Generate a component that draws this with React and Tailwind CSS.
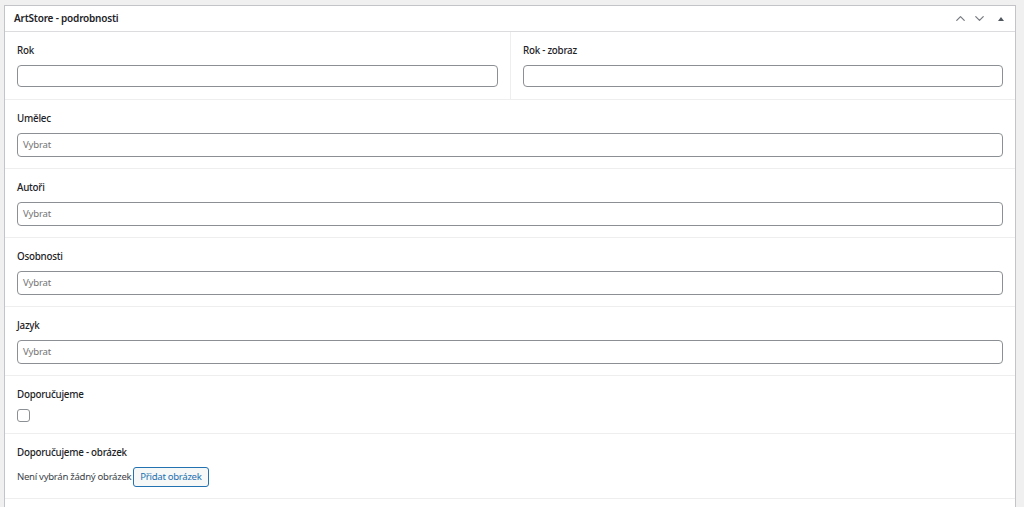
import { ChevronUp, ChevronDown } from 'lucide-react'

const font = { fontFamily: '"Noto Sans", "Open Sans", sans-serif' }

function Label({ children }) {
  return <div className="h-4 leading-4 mb-[6px] text-[9.8px] font-medium tracking-[-0.25px] text-[#1d2327]">{children}</div>
}

function TextField({ label }) {
  return (
    <div className="px-3 pt-[11px] pb-3">
      <Label>{label}</Label>
      <div className="h-[22px] border border-[#8c8f94] rounded-[4px] bg-white"></div>
    </div>
  )
}

function SelectField({ label }) {
  return (
    <div className="px-3 pt-[11px] pb-[11px] border-t border-[#eeeeee]">
      <Label>{label}</Label>
      <div className="h-6 border border-[#8c8f94] rounded-[4px] bg-white flex items-center px-[5px] text-[9.6px] tracking-[-0.2px] text-[#757575]">
        Vybrat
      </div>
    </div>
  )
}

export default function App() {
  return (
    <div className="min-h-screen bg-[#f0f0f1] pt-[5px] pl-[4px] pr-[8px]" style={font}>
      <div className="bg-white border border-[#c3c4c7] border-b-0">
        <div className="h-[26px] border-b border-[#dcdcde] flex items-center pl-[9px] pr-[10px]">
          <div className="flex-1 text-[10px] font-semibold tracking-[-0.2px] text-[#1d2327]">ArtStore - podrobnosti</div>
          <div className="flex items-center gap-[4px] text-[#787c82]">
            <ChevronUp size={15} strokeWidth={2} />
            <ChevronDown size={15} strokeWidth={2} />
            <svg width="8" height="6" viewBox="0 0 8 6" className="ml-[6px]">
              <path d="M4 1 L7 5 L1 5 Z" fill="#50575e" />
            </svg>
          </div>
        </div>

        <div className="grid grid-cols-2">
          <TextField label="Rok" />
          <div className="border-l border-[#eeeeee]">
            <TextField label="Rok - zobraz" />
          </div>
        </div>

        <SelectField label="Umělec" />
        <SelectField label="Autoři" />
        <SelectField label="Osobnosti" />
        <SelectField label="Jazyk" />

        <div className="px-3 pt-[11px] pb-[11px] border-t border-[#eeeeee]">
          <Label>Doporučujeme</Label>
          <div className="w-[13px] h-[13px] border border-[#8c8f94] rounded-[3px] bg-white"></div>
        </div>

        <div className="px-3 pt-[11px] pb-[11px] border-t border-[#eeeeee]">
          <Label>Doporučujeme - obrázek</Label>
          <div className="flex items-center gap-[2px] text-[9.6px] tracking-[-0.3px] text-[#3c434a]">
            <span>Není vybrán žádný obrázek</span>
            <button className="h-5 px-[6px] border border-[#2271b1] rounded-[3px] bg-[#f6f7f7] text-[#2271b1] text-[9.6px] tracking-[-0.3px]">
              Přidat obrázek
            </button>
          </div>
        </div>

        <div className="h-[20px] border-t border-[#eeeeee]"></div>
      </div>
    </div>
  )
}
